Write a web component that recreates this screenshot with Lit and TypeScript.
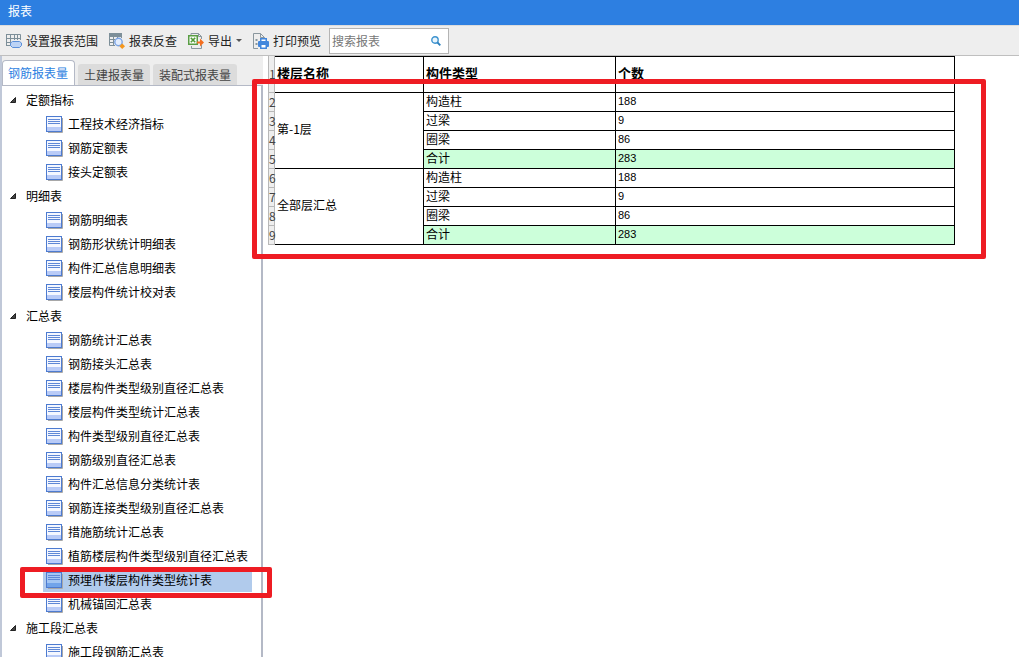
import { LitElement, html, css, svg, nothing } from "lit";
import { customElement, state } from "lit/decorators.js";
import { classMap } from "lit/directives/class-map.js";

interface Group {
  name: string;
  reports: string[];
}

const TABS = ["钢筋报表量", "土建报表量", "装配式报表量"];

const GROUPS: Group[] = [
  { name: "定额指标", reports: ["工程技术经济指标", "钢筋定额表", "接头定额表"] },
  {
    name: "明细表",
    reports: ["钢筋明细表", "钢筋形状统计明细表", "构件汇总信息明细表", "楼层构件统计校对表"],
  },
  {
    name: "汇总表",
    reports: [
      "钢筋统计汇总表",
      "钢筋接头汇总表",
      "楼层构件类型级别直径汇总表",
      "楼层构件类型统计汇总表",
      "构件类型级别直径汇总表",
      "钢筋级别直径汇总表",
      "构件汇总信息分类统计表",
      "钢筋连接类型级别直径汇总表",
      "措施筋统计汇总表",
      "植筋楼层构件类型级别直径汇总表",
      "预埋件楼层构件类型统计表",
      "机械锚固汇总表",
    ],
  },
  { name: "施工段汇总表", reports: ["施工段钢筋汇总表"] },
];

const FLOORS = [
  { name: "第-1层", rows: [["构造柱", 188], ["过梁", 9], ["圈梁", 86], ["合计", 283]] },
  { name: "全部层汇总", rows: [["构造柱", 188], ["过梁", 9], ["圈梁", 86], ["合计", 283]] },
];

const ICONS = {
  range: svg`
    <path d="M0.5 1.5H14.5V7M0.5 5.5H14.5M0.5 9.5H5M0.5 12.5H5M0.5 1V13M4.5 1V13M8.5 1V7M11.5 1V7" fill="none" stroke="#7d8f99"/>
    <path d="M6.5 8.5H13.5L15.5 10V12.5L13.5 14.5H6.500L4.500 12.500V10Z" fill="#bcd3f5" stroke="#5b8fd9"/>`,
  check: svg`
    <rect x="0" y="0" width="13" height="4" fill="#7d8f99"/>
    <path d="M0.5 0V12.5H6M4.5 3V13M8.5 3V5M12.5 3V5M0.5 6.5H6M0.5 9.5H5" fill="none" stroke="#7d8f99"/>
    <circle cx="9.5" cy="9" r="3.7" fill="#e3edfd" stroke="#7ba4e4" stroke-width="1.4"/>
    <path d="M13.2 10.4L16 13.2L13.2 16L10.4 13.2Z" fill="#f5971d"/>`,
  export: svg`
    <path d="M3 2.5V0.5H10.5L13.5 3.5V6M13.5 12V15.5H3.5V13M10.5 0.5V3.5H13.5" fill="none" stroke="#8a979e"/>
    <rect x="0.75" y="2.75" width="8.5" height="8.5" fill="#fff" stroke="#5a9e45" stroke-width="1.5"/>
    <path d="M2.8 4.7L7.2 9.3M7.2 4.7L2.8 9.3" fill="none" stroke="#4f9b35" stroke-width="1.6"/>
    <path d="M9 8.5H12V5.5L16 9.5L12 13.5V10.5H9Z" fill="#f36f21"/>`,
  print: svg`
    <path d="M5 15.5H0.5V0.5H7.5L11.5 4.5V6M7.5 0.5V4.5H11.5" fill="none" stroke="#8a979e"/>
    <path d="M2.500 6h2v2h-2zM2.500 10h2v2h-2z" fill="#8a979e"/>
    <rect x="7.750" y="5.750" width="5.500" height="4" fill="#fff" stroke="#4387dc" stroke-width="1.500"/>
    <rect x="5" y="8" width="11" height="6" rx="1" fill="#4387dc"/>
    <rect x="7.750" y="11.250" width="5.500" height="4" fill="#fff" stroke="#4387dc" stroke-width="1.500"/>`,
};

const reportIcon = svg`
  <path d="M2 16.5H16.5V2" fill="none" stroke="#a8a8a8"/>
  <rect class="sheet" x="0.5" y="0.5" width="15" height="15"/>
  <rect class="foot" x="1" y="11" width="14" height="4"/>
  <path d="M2 3.5H14M2 5.5H14M2 7.5H14" fill="none" stroke="#5f88d6"/>`;

@customElement("app-root")
export class AppRoot extends LitElement {
  @state() private tab = 0;
  @state() private selected = "预埋件楼层构件类型统计表";
  @state() private collapsed = new Set<string>();

  static styles = css`
    :host {
      display: flex;
      flex-direction: column;
      position: relative;
      height: 100vh;
      overflow: hidden;
      background: #fff;
      color: #000;
      font: 12px/24px "Noto Sans CJK SC", sans-serif;
    }
    * {
      box-sizing: border-box;
    }
    button {
      padding: 0;
      border: 0;
      background: none;
      color: inherit;
      font: inherit;
      white-space: nowrap;
    }
    svg {
      display: block;
      flex: none;
    }
    .title {
      margin: 0;
      padding: 0 8px;
      height: 25px;
      flex: none;
      background: #2d7fe1;
      color: #fff;
      font-size: 12px;
      font-weight: 400;
      line-height: 22px;
    }
    .toolbar {
      display: flex;
      align-items: center;
      flex: none;
      gap: 11px;
      height: 31px;
      padding: 0 6px;
      background: #eee;
      border-top: 1px solid #dcdcdc;
      border-bottom: 1px solid #bfbfbf;
      color: #222;
    }
    .tool {
      display: flex;
      align-items: center;
      gap: 4px;
    }
    .caret {
      border: 3px solid transparent;
      border-top-color: #555;
      border-bottom: 0;
    }
    .search {
      display: flex;
      align-items: center;
      width: 120px;
      height: 26px;
      margin-left: -3px;
      padding: 0 7px 0 2px;
      background: #fff;
      border: 1px solid #b4b4b4;
    }
    .search input {
      flex: 1;
      min-width: 0;
      padding: 0;
      border: 0;
      outline: 0;
      background: none;
      font: inherit;
    }
    .search input::placeholder {
      color: #777;
    }
    .body {
      display: flex;
      flex: 1;
      min-height: 0;
    }
    .side {
      display: flex;
      flex-direction: column;
      flex: none;
      width: 263px;
      border-left: 2px solid #c0c8d8;
      background: #eee;
    }
    .tabs {
      display: flex;
      align-items: flex-end;
      gap: 3px;
      flex: none;
      height: 29px;
    }
    .tab {
      height: 21px;
      padding: 0 6px;
      background: #dcdcdc;
      border-radius: 3px 3px 0 0;
      color: #444;
      line-height: 21px;
    }
    .tab.on {
      height: 25px;
      padding: 0 6px 0 5px;
      border: 1px solid #b4b9c6;
      border-bottom: 0;
      border-radius: 4px 4px 0 0;
      background: #fff;
      color: #2d7fe1;
      line-height: 24px;
    }
    .tree {
      flex: 1;
      min-height: 0;
      overflow: hidden;
      margin: 0;
      padding: 2px 0 0;
      list-style: none;
      background: #fff;
      border: solid #b4b9c6;
      border-width: 1px 2px 0 0;
    }
    .tree ul {
      margin: 0;
      padding: 0;
      list-style: none;
    }
    .group {
      display: flex;
      align-items: center;
      gap: 10px;
      height: 24px;
      padding-left: 8px;
    }
    .group.closed svg {
      transform: rotate(-45deg);
    }
    .report {
      display: flex;
      align-items: center;
      gap: 5px;
      width: 209px;
      height: 24px;
      margin-left: 41px;
      padding-left: 3px;
    }
    .report.on {
      background: #b1cbec;
    }
    .sheet {
      fill: #f4f7ff;
      stroke: #4d7bd0;
    }
    .foot {
      fill: #b9cbf7;
    }
    .on .sheet {
      fill: #a3c6f3;
    }
    .on .foot {
      fill: #71a4ea;
    }
    .view {
      flex: 1;
      min-width: 0;
      overflow: hidden;
      padding-left: 5px;
    }
    table {
      width: 687px;
      table-layout: fixed;
      border-collapse: separate;
      border-spacing: 0;
      line-height: 16px;
    }
    .c-num {
      width: 7px;
    }
    .c-floor {
      width: 148px;
    }
    .c-type {
      width: 192px;
    }
    th,
    td {
      height: 19px;
      padding: 0 2px 2px;
      border-bottom: 1px solid #000;
      text-align: left;
      font-weight: 400;
    }
    thead th {
      height: 37px;
      padding-bottom: 4px;
      border-top: 1px solid #000;
      font-size: 13px;
      font-weight: 700;
    }
    .floor {
      padding-bottom: 4px;
    }
    .type,
    .count {
      border-left: 1px solid #000;
    }
    .count {
      border-right: 1px solid #000;
    }
    td.count {
      font-family: "Liberation Sans", sans-serif;
      font-size: 11px;
    }
    .num {
      padding: 0;
      background: #eee;
      border: solid #b8b8b8;
      border-width: 0 1px 1px;
      color: #444;
      font: 12px/18px "Noto Sans CJK SC", sans-serif;
    }
    thead .num {
      padding: 0;
      font-size: 12px;
      font-weight: 400;
    }
    .total {
      background: #ccffda;
    }
    .mark {
      position: absolute;
      border: 5px solid #ee1c23;
      border-radius: 2px;
      pointer-events: none;
    }
    .mark-table {
      left: 252px;
      top: 79px;
      width: 734px;
      height: 180px;
    }
    .mark-report {
      left: 20px;
      top: 567px;
      width: 252px;
      height: 31px;
    }
  `;

  private toggle(name: string) {
    const next = new Set(this.collapsed);
    if (!next.delete(name)) next.add(name);
    this.collapsed = next;
  }

  private tool(icon: keyof typeof ICONS, label: string, menu = false) {
    return html`<button class="tool">
      <svg width="16" height="16" viewBox="0 0 16 16" aria-hidden="true">${ICONS[icon]}</svg>
      <span>${label}</span>${menu ? html`<span class="caret"></span>` : nothing}
    </button>`;
  }

  private renderGroup(g: Group) {
    const closed = this.collapsed.has(g.name);
    return html`<li>
      <button
        class=${classMap({ group: true, closed })}
        aria-expanded=${closed ? "false" : "true"}
        @click=${() => this.toggle(g.name)}
      >
        <svg width="6" height="6" viewBox="0 0 6 6" aria-hidden="true">
          <path d="M5.5 0.5V5.5H0.5Z" fill="#444" stroke="#222" />
        </svg>
        ${g.name}
      </button>
      ${closed
        ? nothing
        : html`<ul>
            ${g.reports.map(
              (r) => html`<li>
                <button
                  class=${classMap({ report: true, on: r === this.selected })}
                  @click=${() => (this.selected = r)}
                >
                  <svg width="17" height="17" viewBox="0 0 17 17" aria-hidden="true">${reportIcon}</svg>
                  ${r}
                </button>
              </li>`
            )}
          </ul>`}
    </li>`;
  }

  private renderTable() {
    let n = 1;
    return html`<table>
      <colgroup>
        <col class="c-num" /><col class="c-floor" /><col class="c-type" /><col />
      </colgroup>
      <thead>
        <tr>
          <th class="num">1</th>
          <th scope="col">楼层名称</th>
          <th scope="col" class="type">构件类型</th>
          <th scope="col" class="count">个数</th>
        </tr>
      </thead>
      <tbody>
        ${FLOORS.map((f) =>
          f.rows.map(([type, count], i) => {
            const total = i === f.rows.length - 1;
            return html`<tr>
              <th class="num">${++n}</th>
              ${i === 0 ? html`<td class="floor" rowspan=${f.rows.length}>${f.name}</td>` : nothing}
              <td class=${classMap({ type: true, total })}>${type}</td>
              <td class=${classMap({ count: true, total })}>${count}</td>
            </tr>`;
          })
        )}
      </tbody>
    </table>`;
  }

  render() {
    return html`
      <h1 class="title">报表</h1>
      <div class="toolbar">
        ${this.tool("range", "设置报表范围")} ${this.tool("check", "报表反查")}
        ${this.tool("export", "导出", true)} ${this.tool("print", "打印预览")}
        <label class="search">
          <input type="text" placeholder="搜索报表" aria-label="搜索报表" />
          <svg width="10" height="10" viewBox="0 0 10 10" aria-hidden="true">
            <circle cx="4" cy="4" r="3.2" fill="#eaf5fc" stroke="#3d93cf" stroke-width="1.4" />
            <path d="M6.5 6.5L9.3 9.3" stroke="#2b7fbd" stroke-width="1.8" />
          </svg>
        </label>
      </div>
      <div class="body">
        <nav class="side">
          <div class="tabs" role="tablist">
            ${TABS.map(
              (t, i) => html`<button
                role="tab"
                aria-selected=${i === this.tab ? "true" : "false"}
                class=${classMap({ tab: true, on: i === this.tab })}
                @click=${() => (this.tab = i)}
              >
                ${t}
              </button>`
            )}
          </div>
          <ul class="tree">
            ${GROUPS.map((g) => this.renderGroup(g))}
          </ul>
        </nav>
        <main class="view">${this.renderTable()}</main>
      </div>
      <div class="mark mark-table"></div>
      <div class="mark mark-report"></div>
    `;
  }
}
